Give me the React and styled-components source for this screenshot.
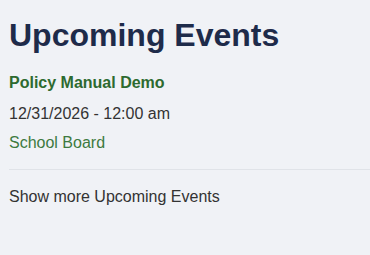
import React from "react";
import styled, { createGlobalStyle } from "styled-components";

const Global = createGlobalStyle`
  html, body { margin: 0; padding: 0; background: #f0f2f6; }
  body { font-family: "Liberation Sans", Arial, sans-serif; }
`;

const Section = styled.section`
  padding: 16px 0 0 9px;
  display: flex;
  flex-direction: column;
`;

const Title = styled.h1`
  margin: 0;
  font-size: 32px;
  line-height: 38px;
  font-weight: 700;
  color: #1e2b4a;
`;

const EventList = styled.div`
  display: flex;
  flex-direction: column;
  margin-top: 17px;
`;

const Line = styled.div`
  font-size: 16px;
  line-height: 24px;
  margin-top: ${(p) => p.$gap || 0}px;
  color: ${(p) => p.$color || "#333"};
  font-weight: ${(p) => (p.$bold ? 700 : 400)};
`;

const Divider = styled.hr`
  border: 0;
  height: 1px;
  background: #e0e3e8;
  margin: 14px 0 0 0;
`;

const More = styled.a`
  display: block;
  margin-top: 14.5px;
  font-size: 16px;
  line-height: 24px;
  color: #333;
  text-decoration: none;
`;

export default function App() {
  return (
    <>
      <Global />
      <Section>
        <Title>Upcoming Events</Title>
        <EventList>
          <Line $bold $color="#2d6a2f">Policy Manual Demo</Line>
          <Line $gap={7}>12/31/2026 - 12:00 am</Line>
          <Line $gap={5} $color="#3d7a3f">School Board</Line>
        </EventList>
        <Divider />
        <More href="#">Show more Upcoming Events</More>
      </Section>
    </>
  );
}
